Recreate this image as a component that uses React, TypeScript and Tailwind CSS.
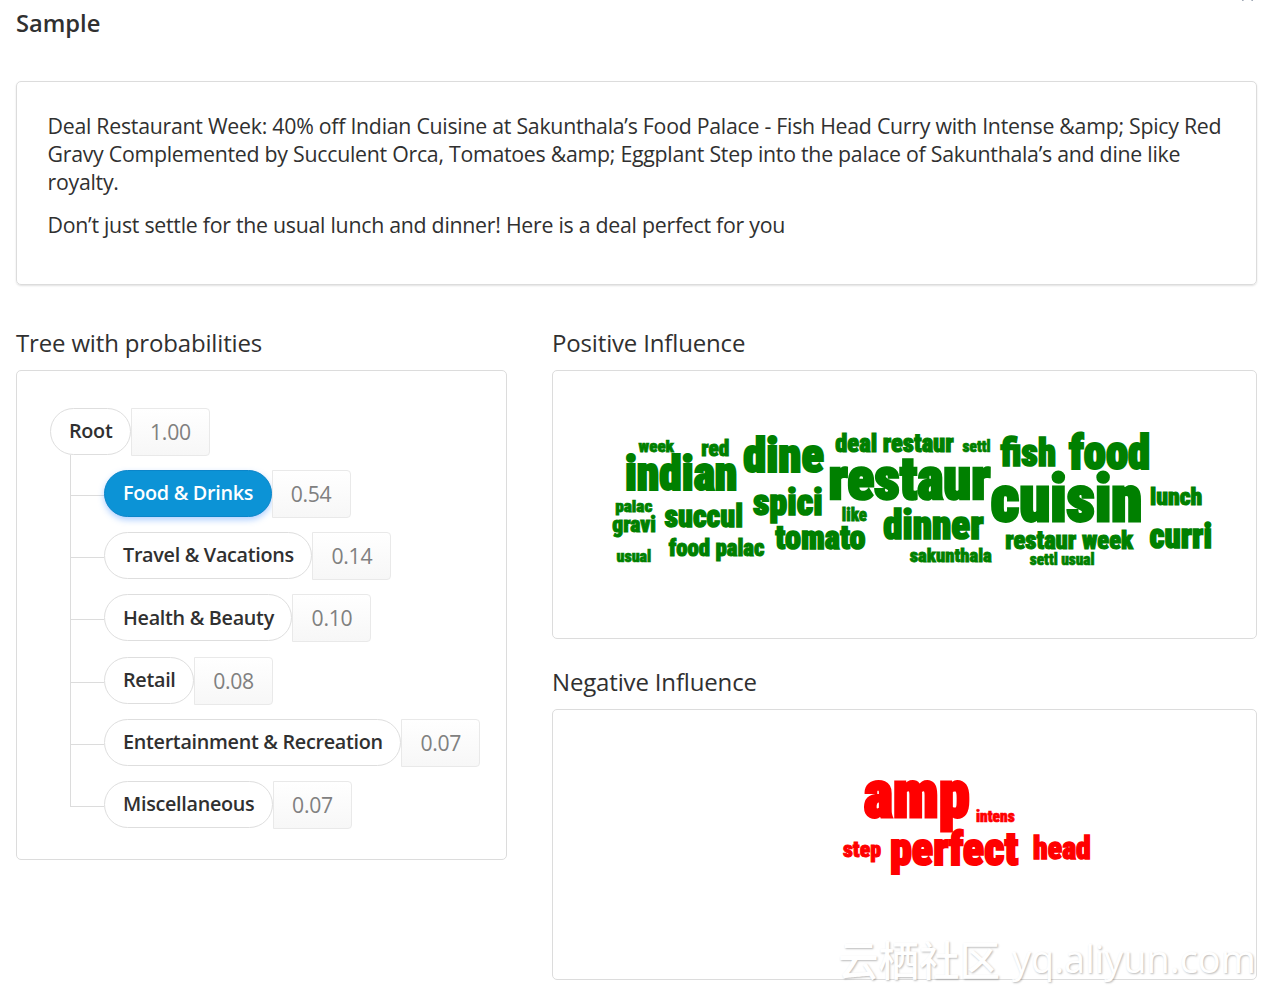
import { X } from "lucide-react";
import clsx from "clsx";

type Word = { text: string; x: number; y: number; width: number; height: number };

// x / y is the left end of the baseline, height is the ascender height
const positive: Word[] = [
  { text: "week", x: 638.5, y: 451.7, width: 35.5, height: 12.5 },
  { text: "red", x: 701.3, y: 455.5, width: 28, height: 16.5 },
  { text: "dine", x: 743.2, y: 472.3, width: 80.7, height: 35 },
  { text: "indian", x: 625, y: 490, width: 112.3, height: 34.3 },
  { text: "deal restaur", x: 835.2, y: 452.2, width: 118.6, height: 18.5 },
  { text: "palac", x: 615.2, y: 511.7, width: 37.2, height: 12.5 },
  { text: "gravi", x: 612.2, y: 532.2, width: 43.7, height: 15.5 },
  { text: "succul", x: 664.5, y: 526.7, width: 78.5, height: 22 },
  { text: "spici", x: 753, y: 514.7, width: 69.7, height: 27 },
  { text: "restaur", x: 828.5, y: 498.7, width: 162, height: 43 },
  { text: "like", x: 841.8, y: 520.7, width: 25.2, height: 13.3 },
  { text: "tomato", x: 775.3, y: 549, width: 90.2, height: 24 },
  { text: "dinner", x: 883.2, y: 539, width: 100.4, height: 29 },
  { text: "food palac", x: 668.7, y: 556, width: 95.8, height: 17.5 },
  { text: "usual", x: 616.5, y: 562.3, width: 34.7, height: 11.5 },
  { text: "settl", x: 962.5, y: 451.7, width: 28, height: 11.5 },
  { text: "fish", x: 1000.5, y: 466, width: 55.5, height: 28 },
  { text: "food", x: 1069, y: 469, width: 81.2, height: 34.5 },
  { text: "cuisin", x: 990.7, y: 520.7, width: 151.5, height: 46.5 },
  { text: "lunch", x: 1150, y: 504.7, width: 52.3, height: 17.7 },
  { text: "sakunthala", x: 909.7, y: 562.2, width: 82, height: 13.5 },
  { text: "restaur week", x: 1005.2, y: 548.7, width: 128, height: 18 },
  { text: "settl usual", x: 1029.8, y: 564.7, width: 64.7, height: 11.5 },
  { text: "curri", x: 1149.5, y: 547.7, width: 62.5, height: 24.8 },
];

const negative: Word[] = [
  { text: "amp", x: 863.7, y: 817.3, width: 106, height: 48 },
  { text: "intens", x: 976, y: 821.7, width: 38.7, height: 11.5 },
  { text: "step", x: 843, y: 856.7, width: 38, height: 15.5 },
  { text: "perfect", x: 890, y: 865.2, width: 128.2, height: 33.5 },
  { text: "head", x: 1033, y: 858.7, width: 57.8, height: 22.3 },
];

const categories = [
  { name: "Food & Drinks", value: "0.54", active: true },
  { name: "Travel & Vacations", value: "0.14" },
  { name: "Health & Beauty", value: "0.10" },
  { name: "Retail", value: "0.08" },
  { name: "Entertainment & Recreation", value: "0.07" },
  { name: "Miscellaneous", value: "0.07" },
];

function WordCloud({ words, top, className }: { words: Word[]; top: number; className: string }) {
  return (
    <svg
      viewBox={`553 ${top} 703 268`}
      className={clsx("block h-[268px] w-[703px] font-['Impact','Roboto',sans-serif] font-black [font-stretch:75%]", className)}
    >
      {words.map((word) => (
        <text
          key={word.text}
          x={word.x}
          y={word.y}
          fontSize={word.height / 0.72}
          textLength={word.width}
          lengthAdjust="spacingAndGlyphs"
          stroke="currentColor"
          strokeWidth={word.height * 0.06}
          fill="currentColor"
        >
          {word.text}
        </text>
      ))}
    </svg>
  );
}

function Node({ name, value, active }: { name: string; value: string; active?: boolean }) {
  return (
    <div className="flex h-12 items-start">
      <span
        className={clsx(
          "flex h-[47px] items-center rounded-full border pr-[17.5px] pb-px pl-[18px] text-[19.8px] font-semibold tracking-[-0.3px] whitespace-nowrap",
          active
            ? "border-[#0b85c9] bg-[#0c93d6] text-white shadow-[0_3px_6px_rgba(60,140,255,0.4)]"
            : "border-[#dedede] bg-white text-[#303030]"
        )}
      >
        {name}
      </span>
      <span className="flex h-12 w-[79px] items-center justify-center rounded-r-[4px] border border-[#e9e9e9] bg-linear-to-b from-white to-[#f7f7f7] text-[21.2px] tracking-[-0.3px] text-[#808080]">
        {value}
      </span>
    </div>
  );
}

export default function App() {
  return (
    <main className="relative h-[992px] w-[1269px] overflow-hidden bg-white pl-4 font-['Open_Sans',sans-serif] text-[#303030]">
      <X className="absolute -top-[14px] left-[1238px] size-[19px] text-gray-400" strokeWidth={2} />

      <h1 className="h-[81px] pt-[6px] text-[23.7px] leading-[34px] font-semibold">Sample</h1>

      <section className="h-[204px] w-[1241px] rounded-[5px] border border-[#dcdcdc] pt-[29.5px] pl-[30.5px] text-[21.3px] leading-[28.3px] tracking-[-0.26px] shadow-[0_1px_2px_rgba(0,0,0,0.12)]">
        <p>
          Deal Restaurant Week: 40% off Indian Cuisine at Sakunthala’s Food Palace - Fish Head Curry with Intense &amp;amp; Spicy Red
          <br />
          Gravy Complemented by Succulent Orca, Tomatoes &amp;amp; Eggplant Step into the palace of Sakunthala’s and dine like
          <br />
          royalty.
        </p>
        <p className="mt-[15px]">Don’t just settle for the usual lunch and dinner! Here is a deal perfect for you</p>
      </section>

      <div className="flex gap-[45px] pt-[41px]">
        <div className="w-[491px]">
          <h2 className="h-[44px] text-[24px] leading-[33px] tracking-[-0.16px]">Tree with probabilities</h2>
          <section className="h-[490px] rounded-[5px] border border-[#dcdcdc] pt-[37px] pl-[33px]">
            <Node name="Root" value="1.00" />
            <ul className="-mt-px ml-5">
              {categories.map((category, i) => (
                <li key={category.name} className="flex h-[62.2px]">
                  <div className="flex w-[34px] flex-col">
                    <div className="h-[41px] border-b border-l border-[#dcdcdc]" />
                    {i < categories.length - 1 && <div className="flex-1 border-l border-[#dcdcdc]" />}
                  </div>
                  <div className="pt-[15px]">
                    <Node {...category} />
                  </div>
                </li>
              ))}
            </ul>
          </section>
        </div>

        <div className="w-[705px]">
          <h2 className="h-[44px] text-[24px] leading-[33px] tracking-[-0.16px]">Positive Influence</h2>
          <section className="h-[269px] rounded-[5px] border border-[#dcdcdc]">
            <WordCloud words={positive} top={371} className="text-[#008000]" />
          </section>
          <h2 className="mt-[26px] h-[44px] text-[24px] leading-[33px] tracking-[-0.16px]">Negative Influence</h2>
          <section className="h-[271px] rounded-[5px] border border-[#dcdcdc]">
            <WordCloud words={negative} top={710} className="text-[#ff0000]" />
          </section>
        </div>
      </div>

      <div className="absolute top-[930px] left-[838px] flex items-center leading-[54px] whitespace-nowrap text-white [text-shadow:1px_1px_2px_rgba(0,0,0,0.27)]">
        <span className="pt-[2px] font-['Noto_Sans_CJK_SC',sans-serif] text-[40.5px] font-medium">云栖社区</span>
        <span className="ml-[12px] font-['Open_Sans','Noto_Sans_CJK_SC',sans-serif] text-[37.9px]">yq.aliyun.com</span>
      </div>
    </main>
  );
}
